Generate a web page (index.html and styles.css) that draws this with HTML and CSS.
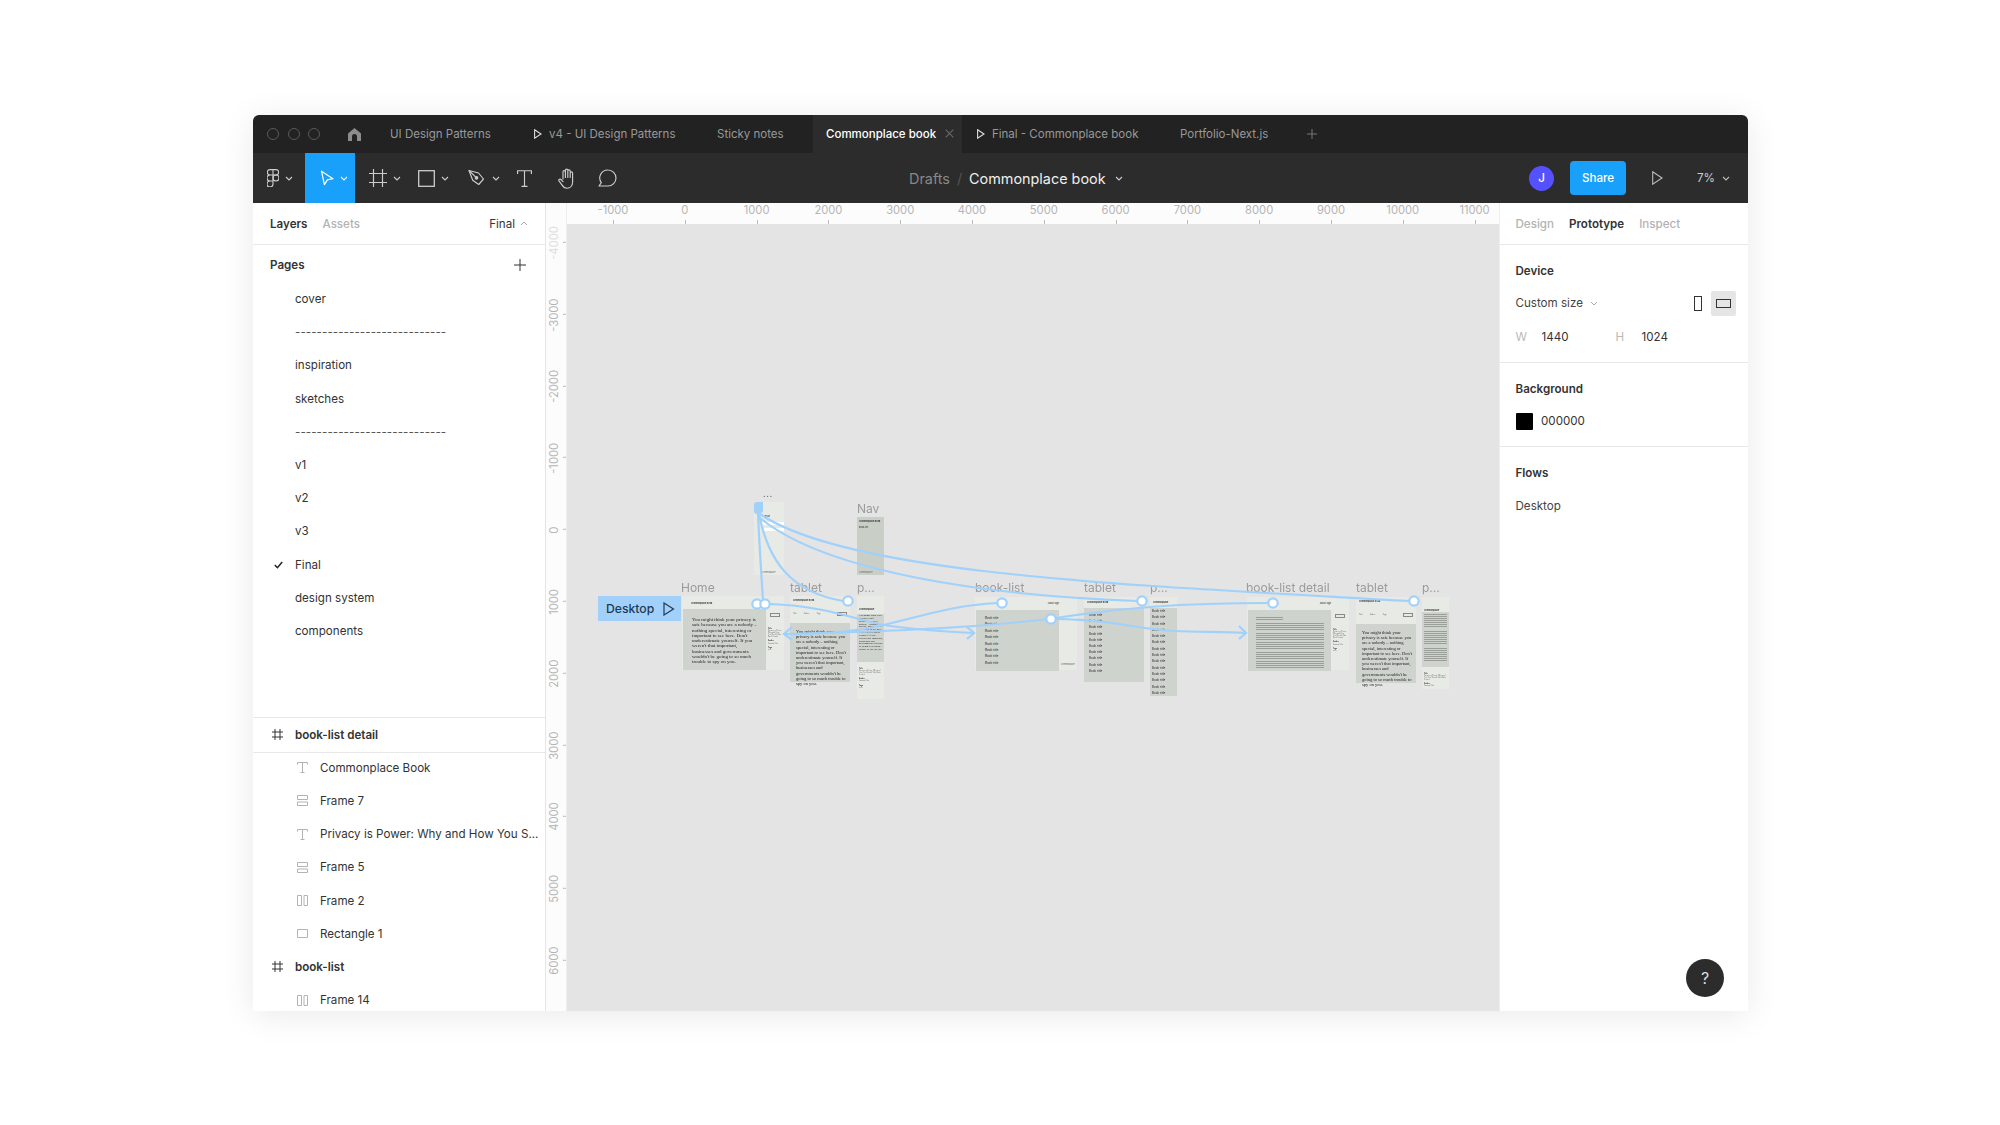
FILE: index.html
```html
<!DOCTYPE html>
<html>
<head>
<meta charset="UTF-8">
<title>Commonplace book - Figma</title>
<link rel="stylesheet" href="styles.css">
</head>
<body>
<div class="window">

	<!-- tabs -->
	<div class="tabbar">
		<div class="lights"><i></i><i></i><i></i></div>
		<svg class="home-icon" width="13" height="13" viewBox="0 0 13 13"><path d="M0 13V5.500L6.500 0 13 5.500V13H9V8.500a2.500 2.500 0 0 0-5 0V13z" fill="#8c8c8c"/></svg>
		<div class="tab t1">UI Design Patterns</div>
		<div class="tab t2"><svg width="8" height="10" viewBox="0 0 8 10"><path d="M.6.8 7 5 .6 9.200z" fill="none" stroke="#ddd" stroke-width="1.100"/></svg>v4 - UI Design Patterns</div>
		<div class="tab t3">Sticky notes</div>
		<div class="tab active">Commonplace book<svg class="tab-x" width="9" height="9" viewBox="0 0 9 9"><path d="M.7.7l7.600 7.600M8.300.7L.7 8.300" stroke="#666" stroke-width="1.200"/></svg></div>
		<div class="tab t5"><svg width="8" height="10" viewBox="0 0 8 10"><path d="M.6.8 7 5 .6 9.200z" fill="none" stroke="#ddd" stroke-width="1.100"/></svg>Final - Commonplace book</div>
		<div class="tab t6">Portfolio-Next.js</div>
		<svg class="tab-plus" width="10" height="10" viewBox="0 0 10 10"><path d="M5 0v10M0 5h10" stroke="#777" stroke-width="1"/></svg>
	</div>

	<!-- toolbar -->
	<div class="toolbar">
		<div class="tools">
			<div class="tool tool-logo">
				<svg width="12" height="18" viewBox="0 0 12 18" fill="none" stroke="#d0d0d0" stroke-width="1.100"><path d="M6 .6H3a2.700 2.700 0 0 0 0 5.400h3zM6 .6h3a2.700 2.700 0 0 1 0 5.400H6zM6 6H3a3 3 0 0 0 0 6h3zM3 12h3v3a3 3 0 1 1-3-3z"/><circle cx="9" cy="9" r="3"/></svg>
				<svg class="chev" width="8" height="5" viewBox="0 0 8 5"><path d="M1 1l3 3 3-3" fill="none" stroke="#ccc" stroke-width="1.100"/></svg>
			</div>
			<div class="tool tool-move">
				<svg width="14" height="16" viewBox="0 0 14 16"><path d="M1.500 1.200 13 8.700l-5.600 1.200-3 4.700z" fill="none" stroke="#fff" stroke-width="1.200" stroke-linejoin="round"/></svg>
				<svg class="chev" width="8" height="5" viewBox="0 0 8 5"><path d="M1 1l3 3 3-3" fill="none" stroke="#fff" stroke-width="1.100"/></svg>
			</div>
			<div class="tool tool-frame">
				<svg width="18" height="18" viewBox="0 0 18 18"><path d="M4.500 0v18M13.500 0v18M0 4.500h18M0 13.500h18" stroke="#ccc" stroke-width="1.200"/></svg>
				<svg class="chev" width="8" height="5" viewBox="0 0 8 5"><path d="M1 1l3 3 3-3" fill="none" stroke="#ccc" stroke-width="1.100"/></svg>
			</div>
			<div class="tool tool-rect">
				<svg width="17" height="17" viewBox="0 0 17 17"><rect x=".7" y=".7" width="15.600" height="15.600" fill="none" stroke="#ccc" stroke-width="1.300"/></svg>
				<svg class="chev" width="8" height="5" viewBox="0 0 8 5"><path d="M1 1l3 3 3-3" fill="none" stroke="#ccc" stroke-width="1.100"/></svg>
			</div>
			<div class="tool tool-pen">
				<svg width="18" height="18" viewBox="0 0 18 18" fill="none" stroke="#ccc" stroke-width="1.150" stroke-linejoin="round"><path d="M1 1.500 10.500 4l5 6-4.800 5.500-6-4.300z"/><path d="M1 1.500l6.500 6.300"/><circle cx="8.500" cy="8.800" r="1.300" fill="#ccc"/></svg>
				<svg class="chev" width="8" height="5" viewBox="0 0 8 5"><path d="M1 1l3 3 3-3" fill="none" stroke="#ccc" stroke-width="1.100"/></svg>
			</div>
			<div class="tool tool-type">
				<svg width="15" height="17" viewBox="0 0 15 17" fill="none" stroke="#ccc" stroke-width="1.150"><path d="M.6 4V.7h13.800V4M7.500.7v15.600M4.500 16.300h6"/></svg>
			</div>
			<div class="tool tool-hand">
				<svg width="19" height="21" viewBox="0 0 19 21" fill="none" stroke="#ccc" stroke-width="1.150" stroke-linejoin="round" stroke-linecap="round"><path d="M5 11V3.800a1.200 1.200 0 0 1 2.400 0V9.500M7.400 9.500V2.300a1.200 1.200 0 0 1 2.400 0V9.500M9.800 9.500V3a1.200 1.200 0 0 1 2.400 0v6.500M12.200 9.500V5a1.200 1.200 0 0 1 2.400 0v9c0 3.600-2.300 6.200-5.500 6.200-2.700 0-4-1.300-5.200-3.300L1 12.800c-.7-1.200 1-2.300 2-1.300l2 2.200"/></svg>
			</div>
			<div class="tool tool-comment">
				<svg width="19" height="18" viewBox="0 0 19 18" fill="none" stroke="#ccc" stroke-width="1.150" stroke-linejoin="round"><path d="M10 1a8 8 0 0 1 0 16H1l2.300-3.300A8 8 0 0 1 10 1z"/></svg>
			</div>
		</div>
		<div class="crumb">
			<span class="crumb-dim">Drafts</span>
			<span class="crumb-sep">/</span>
			<span class="crumb-name">Commonplace book</span>
			<svg width="8" height="5" viewBox="0 0 8 5"><path d="M1 1l3 3 3-3" fill="none" stroke="#ccc" stroke-width="1.100"/></svg>
		</div>
		<div class="actions">
			<div class="avatar">J</div>
			<div class="share">Share</div>
			<svg class="present" width="11" height="14" viewBox="0 0 11 14"><path d="M.7.8 10 7 .7 13.200z" fill="none" stroke="#bbb" stroke-width="1.100"/></svg>
			<div class="zoom-val">7%</div>
			<svg width="8" height="5" viewBox="0 0 8 5"><path d="M1 1l3 3 3-3" fill="none" stroke="#bbb" stroke-width="1.100"/></svg>
		</div>
	</div>

	<div class="main">

		<!-- left panel -->
		<div class="panel-left">
			<div class="panel-tabs">
				<span class="ptab on">Layers</span>
				<span class="ptab">Assets</span>
				<span class="page-pick">Final<svg width="8" height="5" viewBox="0 0 8 5"><path d="M1 4l3-3 3 3" fill="none" stroke="#aaa" stroke-width="1"/></svg></span>
			</div>
			<div class="pages">
				<div class="pages-head">
					<span>Pages</span>
					<svg width="12" height="12" viewBox="0 0 12 12"><path d="M6 0v12M0 6h12" stroke="#333" stroke-width="1"/></svg>
				</div>
				<div class="row">cover</div>
				<div class="row dashes">----------------------------</div>
				<div class="row">inspiration</div>
				<div class="row">sketches</div>
				<div class="row dashes">----------------------------</div>
				<div class="row">v1</div>
				<div class="row">v2</div>
				<div class="row">v3</div>
				<div class="row current"><svg width="9" height="8" viewBox="0 0 9 8"><path d="M.8 4l2.600 2.700L8.200 1" fill="none" stroke="#222" stroke-width="1.500"/></svg>Final</div>
				<div class="row">design system</div>
				<div class="row">components</div>
			</div>
			<div class="layers">
				<div class="layer frame-row selected"><svg width="11" height="11" viewBox="0 0 11 11"><path d="M3 0v11M8 0v11M0 3h11M0 8h11" stroke="#333" stroke-width="1"/></svg>book-list detail</div>
				<div class="layer"><svg width="11" height="11" viewBox="0 0 11 11" fill="none" stroke="#b3b3b3"><path d="M.5 2.500V.5h10v2M5.500.5v10M3.500 10.500h4"/></svg>Commonplace Book</div>
				<div class="layer"><svg width="11" height="11" viewBox="0 0 11 11" fill="none" stroke="#b3b3b3"><path d="M.5.5h10v4H.5zM.5 7h10v3.500H.5z"/></svg>Frame 7</div>
				<div class="layer"><svg width="11" height="11" viewBox="0 0 11 11" fill="none" stroke="#b3b3b3"><path d="M.5 2.500V.5h10v2M5.500.5v10M3.500 10.500h4"/></svg>Privacy is Power: Why and How You S...</div>
				<div class="layer"><svg width="11" height="11" viewBox="0 0 11 11" fill="none" stroke="#b3b3b3"><path d="M.5.5h10v4H.5zM.5 7h10v3.500H.5z"/></svg>Frame 5</div>
				<div class="layer"><svg width="11" height="11" viewBox="0 0 11 11" fill="none" stroke="#b3b3b3"><path d="M.5.500h4v10h-4zM7 .5h3.500v10H7z"/></svg>Frame 2</div>
				<div class="layer"><svg width="11" height="11" viewBox="0 0 11 11" fill="none" stroke="#b3b3b3"><path d="M.5 1.500h10v8H.5z"/></svg>Rectangle 1</div>
				<div class="layer frame-row"><svg width="11" height="11" viewBox="0 0 11 11"><path d="M3 0v11M8 0v11M0 3h11M0 8h11" stroke="#333" stroke-width="1"/></svg>book-list</div>
				<div class="layer"><svg width="11" height="11" viewBox="0 0 11 11" fill="none" stroke="#b3b3b3"><path d="M.5.500h4v10h-4zM7 .5h3.500v10H7z"/></svg>Frame 14</div>
			</div>
		</div>

		<!-- vertical ruler -->
		<div class="ruler-y">
			<span class="faded">-4000</span><span>-3000</span><span>-2000</span><span>-1000</span><span>0</span><span>1000</span><span>2000</span><span>3000</span><span>4000</span><span>5000</span><span>6000</span>
		</div>

		<div class="stage">
			<div class="ruler-x">
				<span>-1000</span><span>0</span><span>1000</span><span>2000</span><span>3000</span><span>4000</span><span>5000</span><span>6000</span><span>7000</span><span>8000</span><span>9000</span><span>10000</span><span>11000</span>
			</div>
			<div class="canvas">

				<div class="flow-badge">Desktop<svg width="12" height="14" viewBox="0 0 12 14"><path d="M1 1l9.500 6L1 13z" fill="none" stroke="#1f3a52" stroke-width="1.200"/></svg></div>

				<div class="thumbs">
					<div class="frame f-top">
						<div class="dots">...</div>
						<div class="top-a">About</div>
						<div class="top-bar"></div>
						<div class="top-bar"></div>
						<div class="foot-text top-foot">Commonplace</div>
					</div>

					<div class="frame f-nav dark">
						<div class="tiny-title">Commonplace Book</div>
						<div class="tiny">Book-list</div>
						<div class="foot-text">Commonplace</div>
					</div>

					<div class="frame f-home">
						<div class="head head-desk"><span class="tiny-title">Commonplace Book</span></div>
						<div class="split">
							<div class="block essay">You might think your privacy is safe because you are a nobody – nothing special, interesting or important to see here. Don't underestimate yourself. If you weren't that important, businesses and governments wouldn't be going to so much trouble to spy on you.</div>
							<div class="meta"><i class="btn"></i><b>Title</b><em>Privacy is Power: Why and How You Should Take Back Control</em><b>Author</b><em>Carissa Veliz</em><b>Tags</b><em>tech</em></div>
						</div>
					</div>

					<div class="frame f-tab1">
						<div class="head head-tab"><span class="tiny-title">Commonplace Book</span><span class="cols"><em>Title</em><em>Author</em><em>Tags</em></span><i class="btn"></i></div>
						<div class="block essay essay-tab">You might think your privacy is safe because you are a nobody – nothing special, interesting or important to see here. Don't underestimate yourself. If you weren't that important, businesses and governments wouldn't be going to so much trouble to spy on you.</div>
					</div>

					<div class="frame f-p1">
						<div class="head head-ph"><span class="tiny-title">Commonplace</span><i class="btn"></i></div>
						<div class="block essay essay-ph">You might think your privacy is safe because you are a nobody – nothing special, interesting or important to see here. Don't underestimate yourself. If you weren't that important, businesses and governments wouldn't be going to so much trouble to spy on you.</div>
						<div class="meta meta-ph"><b>Title</b><em>Privacy is Power: Why and How You Should Take Back Control</em><b>Author</b><em>Carissa Veliz</em><b>Tags</b><em>tech</em></div>
					</div>

					<div class="frame f-list">
						<div class="head head-desk head-nav"><span class="tiny">About Sign</span></div>
						<div class="split">
							<div class="block titles titles-desk"><span>Book title</span><span>Book title</span><span>Book title</span><span>Book title</span><span>Book title</span><span>Book title</span><span>Book title</span><span>Book title</span></div>
							<div class="meta"><span class="foot-text">Commonplace</span></div>
						</div>
					</div>

					<div class="frame f-tab2">
						<div class="head head-thin"><span class="tiny-title">Commonplace Book</span></div>
						<div class="block titles titles-tab"><span>Book title</span><span>Book title</span><span>Book title</span><span>Book title</span><span>Book title</span><span>Book title</span><span>Book title</span><span>Book title</span><span>Book title</span><span>Book title</span></div>
					</div>

					<div class="frame f-p2">
						<div class="head head-thin"><span class="tiny-title">Commonplace</span></div>
						<div class="block titles titles-ph"><span>Book title</span><span>Book title</span><span>Book title</span><span>Book title</span><span>Book title</span><span>Book title</span><span>Book title</span><span>Book title</span><span>Book title</span><span>Book title</span><span>Book title</span><span>Book title</span><span>Book title</span><span>Book title</span></div>
					</div>

					<div class="frame f-detail">
						<div class="head head-desk head-nav"><span class="tiny">About Sign</span></div>
						<div class="split">
							<div class="block greek"><i class="g-head"></i><i></i><i></i><i></i><i></i><i></i></div>
							<div class="meta"><i class="btn"></i><b>Title</b><em>Privacy is Power: Why and How You Should Take Back Control</em><b>Author</b><em>Carissa Veliz</em><b>Tags</b><em>tech</em></div>
						</div>
					</div>

					<div class="frame f-tab3">
						<div class="head head-tab"><span class="tiny-title">Commonplace Book</span><span class="cols"><em>Title</em><em>Author</em><em>Tags</em></span><i class="btn"></i></div>
						<div class="block essay essay-tab">You might think your privacy is safe because you are a nobody – nothing special, interesting or important to see here. Don't underestimate yourself. If you weren't that important, businesses and governments wouldn't be going to so much trouble to spy on you.</div>
					</div>

					<div class="frame f-p3">
						<div class="head head-ph3"><span class="tiny-title">Commonplace</span><i class="btn"></i></div>
						<div class="block greek greek-ph"><i></i><i></i><i></i></div>
						<div class="meta meta-ph"><b>Title</b><em>Privacy is Power: Why and How You Should Take Back Control</em><b>Author</b><em>Carissa Veliz</em></div>
					</div>
				</div>

				<div class="frame-label l-nav">Nav</div>
				<div class="frame-label l-home">Home</div>
				<div class="frame-label l-tab1">tablet</div>
				<div class="frame-label l-p1">p...</div>
				<div class="frame-label l-list">book-list</div>
				<div class="frame-label l-tab2">tablet</div>
				<div class="frame-label l-p2">p...</div>
				<div class="frame-label l-detail">book-list detail</div>
				<div class="frame-label l-tab3">tablet</div>
				<div class="frame-label l-p3">p...</div>

				<!-- prototype wires, in window coordinates -->
				<svg class="wires" viewBox="567 224 932 787">
					<g fill="none" stroke="#a1d1fa" stroke-width="2.200">
						<path d="M758 512C759 540 761 570 763 600"/>
						<path d="M759 514C768 560 790 592 843 601"/>
						<path d="M760 518C830 575 1000 596 1137 601"/>
						<path d="M760 514C850 575 1130 585 1409 601"/>
						<path d="M770 604C830 606 860 622 890 626C920 630 950 632 973 633"/>
						<path d="M997 603C950 605 910 620 870 628C840 633 810 634 785 634"/>
						<path d="M1268 603C1180 603 1120 608 1056 618C980 628 880 632 785 634"/>
						<path d="M1056 619C1110 619 1140 630 1175 631C1200 632 1225 632 1245 633"/>
						<path d="M967 627l7 6-7 6M1239 626l7 7-7 6M792 627l-8 7 8 6"/>
					</g>
					<path d="M754 505a3 3 0 0 1 3-3h6v10l-4 2h-2a3 3 0 0 1-3-3z" fill="#a1d1fa"/>
					<g fill="#fff" stroke="#a1d1fa" stroke-width="2.200">
						<circle cx="757" cy="604" r="4.700"/>
						<circle cx="765" cy="604" r="4.700"/>
						<circle cx="848" cy="601" r="4.700"/>
						<circle cx="1002" cy="603" r="4.700"/>
						<circle cx="1142" cy="601" r="4.700"/>
						<circle cx="1051" cy="619" r="4.700"/>
						<circle cx="1273" cy="603" r="4.700"/>
						<circle cx="1414" cy="601" r="4.700"/>
					</g>
				</svg>
			</div>
		</div>

		<!-- right panel -->
		<div class="panel-right">
			<div class="panel-tabs">
				<span class="ptab">Design</span>
				<span class="ptab on">Prototype</span>
				<span class="ptab">Inspect</span>
			</div>
			<div class="section sec-device">
				<div class="sec-title">Device</div>
				<div class="device-row">
					<span class="device-name">Custom size<svg width="8" height="5" viewBox="0 0 8 5"><path d="M1 1l3 3 3-3" fill="none" stroke="#aaa" stroke-width="1"/></svg></span>
					<svg class="ph-icon" width="8" height="15" viewBox="0 0 8 15"><rect x=".5" y=".5" width="7" height="14" fill="none" stroke="#333"/></svg>
					<span class="land"><svg width="15" height="9" viewBox="0 0 15 9"><rect x=".5" y=".5" width="14" height="8" fill="none" stroke="#333"/></svg></span>
				</div>
				<div class="size-row"><label>W</label><span class="w-val">1440</span><label>H</label><span>1024</span></div>
			</div>
			<div class="section sec-bg">
				<div class="sec-title">Background</div>
				<div class="bg-row"><i class="swatch"></i>000000</div>
			</div>
			<div class="section sec-flows">
				<div class="sec-title">Flows</div>
				<div class="flow-row">Desktop</div>
			</div>
			<div class="help">?</div>
		</div>
	</div>
</div>
</body>
</html>
```
FILE: styles.css
```css
* { box-sizing: border-box; }
html, body { margin: 0; padding: 0; }
body {
	width: 2000px;
	height: 1125px;
	overflow: hidden;
	background: #fff;
	padding: 115px 0 0 253px;
	font-family: Inter, "Liberation Sans", sans-serif;
	font-size: 11.600px;
	color: #333;
}
.window {
	width: 1495px;
	height: 896px;
	display: flex;
	flex-direction: column;
	background: #fff;
	border-radius: 6px 6px 0 0;
	overflow: hidden;
	box-shadow: 0 4px 34px rgba(0,0,0,.09);
}

/* tabs */
.tabbar {
	height: 38px;
	flex: none;
	display: flex;
	align-items: center;
	background: #222;
	color: #999;
	font-size: 11.500px;
}
.lights { display: flex; gap: 8.500px; margin-left: 14px; }
.lights i { width: 12px; height: 12px; border: 1px solid #5a5a5a; border-radius: 50%; }
.home-icon { margin-left: 28px; margin-right: 29px; }
.tab { height: 37px; display: flex; align-items: center; flex: none; white-space: nowrap; margin-bottom: 1px; }
.tab svg { margin-right: 7px; }
.t1 { width: 144px; }
.t2 { width: 183px; }
.t3 { width: 96px; }
.active {
	width: 149px;
	height: 38px;
	margin-bottom: 0;
	padding: 0 0 1px 13px;
	background: #2c2c2c;
	color: #fff;
	font-weight: 500;
}
.active .tab-x { margin: 0 0 0 9px; }
.t5 { width: 218px; padding-left: 15px; }
.t6 { width: 127px; }

/* toolbar */
.toolbar {
	height: 50px;
	flex: none;
	display: flex;
	align-items: center;
	position: relative;
	background: #2c2c2c;
	color: #fff;
}
.tools { display: flex; height: 50px; }
.tool { height: 50px; display: flex; align-items: center; flex: none; }
.tool-logo { width: 52px; padding-left: 14px; gap: 6px; }
.tool-move { width: 50px; padding-left: 15px; gap: 6px; background: #18a0fb; }
.tool-frame { width: 49px; padding-left: 14px; gap: 6px; }
.tool-rect { width: 50px; padding-left: 14px; gap: 6px; }
.tool-pen { width: 51px; padding-left: 14px; gap: 6px; }
.tool-type { width: 38px; padding-left: 12px; }
.tool-hand { width: 40px; padding-left: 15px; }
.tool-comment { width: 41px; padding-left: 15px; }
.crumb {
	position: absolute;
	left: 656px;
	top: 0;
	height: 50px;
	display: flex;
	align-items: center;
	font-size: 14.400px;
	white-space: nowrap;
}
.crumb-dim { color: #888; }
.crumb-sep { color: #555; margin: 0 7px; }
.crumb-name { color: #eee; margin-right: 9px; }
.actions { margin-left: auto; display: flex; align-items: center; padding-right: 18px; }
.avatar {
	width: 25px;
	height: 25px;
	border-radius: 50%;
	background: #5551ff;
	display: flex;
	align-items: center;
	justify-content: center;
	font-weight: 500;
}
.share {
	width: 56px;
	height: 34px;
	margin-left: 16px;
	border-radius: 4px;
	background: #18a0fb;
	display: flex;
	align-items: center;
	justify-content: center;
	font-weight: 500;
}
.present { margin-left: 26px; }
.zoom-val { margin-left: 34px; margin-right: 7px; color: #ccc; }

/* main */
.main { flex: 1; min-height: 0; display: flex; position: relative; }
.panel-left {
	width: 293px;
	flex: none;
	display: flex;
	flex-direction: column;
	background: #fff;
	border-right: 1px solid #e5e5e5;
	overflow: hidden;
}
.panel-tabs {
	height: 42px;
	flex: none;
	display: flex;
	align-items: center;
	gap: 15px;
	padding: 0 17px;
	border-bottom: 1px solid #e8e8e8;
	font-weight: 500;
}
.ptab { color: #b3b3b3; }
.ptab.on { color: #333; font-weight: 600; }
.page-pick {
	margin-left: auto;
	display: flex;
	align-items: center;
	gap: 5px;
	font-weight: 400;
}
.pages { height: 472.500px; flex: none; border-bottom: 1px solid #e8e8e8; }
.pages-head {
	height: 37.500px;
	padding: 3px 19px 0 17px;
	display: flex;
	align-items: center;
	justify-content: space-between;
	font-weight: 600;
}
.row { height: 33.200px; padding-left: 42px; display: flex; align-items: center; position: relative; white-space: nowrap; }
.row.dashes { letter-spacing: .07px; color: #555; }
.current svg { position: absolute; left: 21px; top: 13px; }
.layer { height: 33.200px; padding-left: 67px; display: flex; align-items: center; position: relative; white-space: nowrap; }
.layer svg { position: absolute; left: 44px; top: 11px; }
.frame-row { padding-left: 42px; font-weight: 600; }
.frame-row svg { left: 19px; }
.selected { height: 35px; border-bottom: 1px solid #e8e8e8; margin-bottom: -1.300px; }

/* rulers */
.ruler-y {
	width: 21px;
	flex: none;
	background: #fcfcfc;
	padding-top: 4.100px;
	overflow: hidden;
	border-right: 1px solid #eee;
}
.ruler-y span {
	display: flex;
	align-items: center;
	justify-content: center;
	height: 71.800px;
	width: 21px;
	padding-left: 5px;
	writing-mode: vertical-rl;
	transform: rotate(180deg);
	font-size: 11.200px;
	color: #b5b5b5;
	position: relative;
}
.ruler-y span::after {
	content: "";
	position: absolute;
	left: 0;
	top: 50%;
	width: 4px;
	height: 1px;
	background: #bbb;
}
.ruler-y .faded { color: #dedede; }
.stage { flex: 1; min-width: 0; display: flex; flex-direction: column; }
.ruler-x {
	height: 21px;
	flex: none;
	display: flex;
	padding-left: 10.100px;
	background: #fcfcfc;
	overflow: hidden;
}
.ruler-x span {
	width: 71.800px;
	flex: none;
	text-align: center;
	font-size: 11.200px;
	line-height: 15px;
	color: #b5b5b5;
	position: relative;
}
.ruler-x span::after {
	content: "";
	position: absolute;
	left: 50%;
	bottom: 0;
	width: 1px;
	height: 4px;
	background: #bbb;
}

/* canvas, a free board so the nodes sit at their own coordinates */
.canvas { flex: 1; position: relative; background: #e4e4e4; overflow: hidden; }
.wires { position: absolute; left: 0; top: 0; width: 932px; height: 787px; }
.thumbs { position: absolute; left: 0; top: 0; width: 932px; height: 787px; filter: blur(.25px); }
.flow-badge {
	position: absolute;
	left: 31px;
	top: 372px;
	width: 83px;
	height: 25px;
	background: #a1d1fa;
	color: #1f3a52;
	font-size: 12.200px;
	font-weight: 500;
	display: flex;
	align-items: center;
	justify-content: space-between;
	padding: 0 6px 0 8px;
}
.frame { position: absolute; background: #e7eae5; color: #222; }
.frame.dark { background: #c9cec6; }
.frame-label {
	position: absolute;
	font-size: 12px;
	line-height: 15px;
	color: #9b9b9b;
	white-space: nowrap;
}
.l-nav { left: 290px; top: 277px; }
.l-home { left: 114px; top: 356px; }
.l-tab1 { left: 223px; top: 356px; }
.l-p1 { left: 290px; top: 356px; }
.l-list { left: 408px; top: 356px; }
.l-tab2 { left: 517px; top: 356px; }
.l-p2 { left: 583px; top: 356px; }
.l-detail { left: 679px; top: 356px; }
.l-tab3 { left: 789px; top: 356px; }
.l-p3 { left: 855px; top: 356px; }

.f-top { left: 187px; top: 278px; width: 30px; height: 73px; padding-top: 13px; }
.f-nav { left: 290px; top: 293px; width: 27px; height: 58px; padding: 3px 2px; }
.f-home { left: 115px; top: 372px; width: 102px; height: 74px; }
.f-tab1 { left: 223px; top: 372px; width: 60px; height: 86px; }
.f-p1 { left: 290px; top: 372px; width: 27px; height: 103px; }
.f-list { left: 408px; top: 373px; width: 102px; height: 73px; }
.f-tab2 { left: 517px; top: 373px; width: 60px; height: 85px; }
.f-p2 { left: 583px; top: 373px; width: 27px; height: 99px; }
.f-detail { left: 680px; top: 373px; width: 102px; height: 73px; }
.f-tab3 { left: 789px; top: 373px; width: 60px; height: 85px; }
.f-p3 { left: 855px; top: 373px; width: 27px; height: 92px; }

.dots { position: absolute; left: 9px; top: -12px; font-size: 8px; font-weight: 700; line-height: 8px; color: #666; letter-spacing: .6px; }
.top-a { font-size: 2.500px; margin: 0 0 4px 9px; }
.top-bar { height: 3px; background: #fff; margin-bottom: 3px; margin-left: 8px; }
.top-foot { margin: 40px 0 0 8px; }
.tiny-title { font-size: 2.200px; font-weight: 600; white-space: nowrap; }
.tiny { font-size: 2.200px; margin-top: 3px; }
.foot-text { display: block; font-size: 2px; color: #666; }
.f-nav .foot-text { margin-top: 42px; }

.head { display: flex; align-items: flex-start; justify-content: space-between; flex: none; }
.head-desk { height: 13px; padding: 6px 0 0 9px; }
.head-nav { justify-content: flex-end; padding: 2px 18px 0 0; }
.head-tab { display: grid; grid-template-columns: 1fr auto; height: 27px; padding: 3px 3px 0; gap: 2px; }
.head-tab .tiny-title { grid-column: 1 / 3; }
.cols { display: flex; gap: 7px; font-size: 1.800px; }
.cols em { font-style: normal; color: #666; }
.head-ph { display: block; height: 18px; padding: 3px 2px 0; }
.head-ph3 { display: block; height: 15px; padding: 3px 2px 0; }
.head-ph .btn, .head-ph3 .btn { margin-top: 3px; width: 9px; }
.head-thin { height: 11px; padding: 4px 0 0 3px; }
.btn { display: block; width: 10px; height: 4px; border: .5px solid #888; flex: none; }

.split { display: flex; }
.block { background: #cfd3cd; }
.f-home .block, .f-list .block, .f-detail .block { width: 83px; height: 61px; margin-left: 1px; flex: none; }
.essay {
	font-family: "Liberation Serif", serif;
	font-size: 5px;
	line-height: 5.300px;
	color: #222;
	padding: 8px 8px 0 9px;
}
.essay-tab { height: 59px; padding: 6px 4px 0 6px; font-size: 4.500px; line-height: 5.200px; }
.essay-ph {
	height: 48px;
	font-size: 2.650px;
	line-height: 2.850px;
	padding: 1px 1px 0 2px;
	overflow: hidden;
}
.meta { padding: 4px 2px 0 2px; font-size: 1.700px; line-height: 2.100px; min-width: 0; flex: 1; }
.meta .btn { margin: 0 0 10px 2px; }
.meta b { display: block; margin-top: 2px; }
.meta em { display: block; font-style: normal; color: #666; }
.meta-ph { padding: 3px 2px 0; }
.f-list .meta { padding-top: 53px; }

.titles { display: flex; flex-direction: column; font-size: 3px; color: #222; }
.titles-desk { padding: 7px 0 0 9px; gap: 3.400px; }
.titles-tab { height: 74px; padding: 6px 0 0 5px; gap: 3.200px; }
.titles-ph { height: 88px; padding: 2px 0 0 2px; gap: 3.300px; }
.titles span { line-height: 3px; }

.greek { padding: 7px 7px 0 8px; overflow: hidden; }
.greek i {
	display: block;
	height: 7px;
	margin-bottom: 2.500px;
	background: repeating-linear-gradient(#9a9e99 0, #9a9e99 1px, transparent 1px, transparent 2px);
}
.greek .g-head { width: 40%; height: 3px; margin-bottom: 3px; }
.greek-ph { height: 55px; padding: 2px; }
.greek-ph i { height: 14px; margin-bottom: 3px; }

/* right panel */
.panel-right { width: 249px; flex: none; background: #fff; position: relative; border-left: 1px solid #eee; }
.panel-right .panel-tabs { padding-left: 15.500px; }
.section { padding: 18px 15.500px 0; border-bottom: 1px solid #e8e8e8; }
.sec-flows { border-bottom: 0; }
.sec-title { font-weight: 600; height: 17px; line-height: 17px; }
.sec-device { height: 118px; }
.sec-bg { height: 84px; }
.device-row { display: flex; align-items: center; height: 26px; margin-top: 10px; }
.device-name { display: flex; align-items: center; gap: 7px; color: #444; }
.ph-icon { margin-left: auto; margin-right: 9px; }
.land { width: 25px; height: 25px; background: #e5e5e5; border-radius: 2px; display: flex; align-items: center; justify-content: center; margin-right: -3.500px; }
.size-row { display: flex; align-items: center; height: 17px; margin-top: 12px; color: #333; }
.size-row label { color: #b9b9b9; width: 26px; }
.w-val { width: 74px; }
.bg-row { display: flex; align-items: center; gap: 8.500px; height: 18px; margin-top: 14px; color: #333; }
.swatch { width: 17px; height: 17px; background: #000; border-radius: 1px; }
.flow-row { height: 17px; line-height: 17px; margin-top: 16px; color: #444; }
.help {
	position: absolute;
	left: 186px;
	top: 756px;
	width: 38px;
	height: 38px;
	border-radius: 50%;
	background: #2c2c2c;
	color: #ddd;
	font-size: 16px;
	display: flex;
	align-items: center;
	justify-content: center;
}
```
